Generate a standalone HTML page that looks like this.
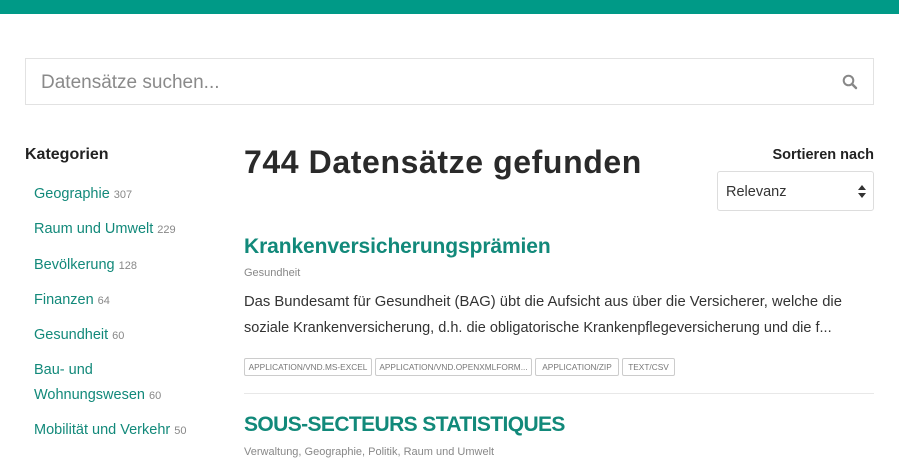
<!DOCTYPE html>
<html><head><meta charset="utf-8"><style>
body{margin:0;width:899px;height:450px;overflow:hidden;background:#fff;font-family:"Liberation Sans",sans-serif;color:#333;position:relative}
.a{position:absolute;white-space:nowrap}
.top{position:absolute;left:0;top:0;width:899px;height:14px;background:#009a87}
.search{position:absolute;left:25px;top:58px;width:847px;height:45px;border:1px solid #e2e2e2}
.search span{position:absolute;left:15px;top:13px;font-size:19px;color:#8a8a8a}
.cat{color:#12897a;font-size:14.5px}
.cat small{color:#888;font-size:11px;margin-left:4px}
.tag{position:absolute;top:358px;height:16px;border:1px solid #ccc;border-radius:2px;font-size:8.3px;color:#777;line-height:16px;text-align:center}
</style></head><body>
<div class="top"></div>
<div class="search"><span>Datensätze suchen...</span>
<svg style="position:absolute;left:816px;top:15px" width="16" height="16" viewBox="0 0 16 16"><circle cx="6.5" cy="6.5" r="4.8" fill="none" stroke="#888" stroke-width="2"/><path d="M10 10L14 14" stroke="#888" stroke-width="2.4" stroke-linecap="round"/></svg></div>
<div class="a" style="left:25px;top:146px;font-size:16px;font-weight:bold;color:#222">Kategorien</div>
<div class="a cat" style="left:34px;top:186px">Geographie<small>307</small></div>
<div class="a cat" style="left:34px;top:221px">Raum und Umwelt<small>229</small></div>
<div class="a cat" style="left:34px;top:257px">Bevölkerung<small>128</small></div>
<div class="a cat" style="left:34px;top:292px">Finanzen<small>64</small></div>
<div class="a cat" style="left:34px;top:327px">Gesundheit<small>60</small></div>
<div class="a cat" style="left:34px;top:362px">Bau- und</div>
<div class="a cat" style="left:34px;top:387px">Wohnungswesen<small>60</small></div>
<div class="a cat" style="left:34px;top:422px">Mobilität und Verkehr<small>50</small></div>
<div class="a" style="left:244px;top:144px;font-size:32px;font-weight:bold;color:#2a2a2a;letter-spacing:0.6px">744 Datensätze gefunden</div>
<div class="a" style="right:25px;top:147px;font-size:14.5px;font-weight:bold;color:#222">Sortieren nach</div>
<div style="position:absolute;left:717px;top:171px;width:155px;height:38px;border:1px solid #ddd;border-radius:3px"><span class="a" style="left:8px;top:12px;font-size:14.5px;color:#333">Relevanz</span>
<svg style="position:absolute;left:140px;top:13px" width="8" height="13" viewBox="0 0 8 13"><path d="M4 0L8 5H0Z M4 13L8 8H0Z" fill="#333"/></svg></div>
<div class="a" style="left:244px;top:235px;font-size:21px;font-weight:bold;color:#12897a;letter-spacing:-0.1px">Krankenversicherungsprämien</div>
<div class="a" style="left:244px;top:267px;font-size:11px;color:#888">Gesundheit</div>
<div class="a" style="left:244px;top:294px;font-size:14.8px;color:#333">Das Bundesamt für Gesundheit (BAG) übt die Aufsicht aus über die Versicherer, welche die</div>
<div class="a" style="left:244px;top:320px;font-size:14.5px;color:#333">soziale Krankenversicherung, d.h. die obligatorische Krankenpflegeversicherung und die f...</div>
<div class="tag" style="left:244px;width:126px">APPLICATION/VND.MS-EXCEL</div>
<div class="tag" style="left:375px;width:155px">APPLICATION/VND.OPENXMLFORM...</div>
<div class="tag" style="left:535px;width:82px">APPLICATION/ZIP</div>
<div class="tag" style="left:622px;width:51px">TEXT/CSV</div>
<div style="position:absolute;left:244px;top:393px;width:630px;height:1px;background:#e8e8e8"></div>
<div class="a" style="left:244px;top:413px;font-size:21px;font-weight:bold;color:#12897a;letter-spacing:-0.6px">SOUS-SECTEURS STATISTIQUES</div>
<div class="a" style="left:244px;top:446px;font-size:11px;color:#888">Verwaltung, Geographie, Politik, Raum und Umwelt</div>
</body></html>
